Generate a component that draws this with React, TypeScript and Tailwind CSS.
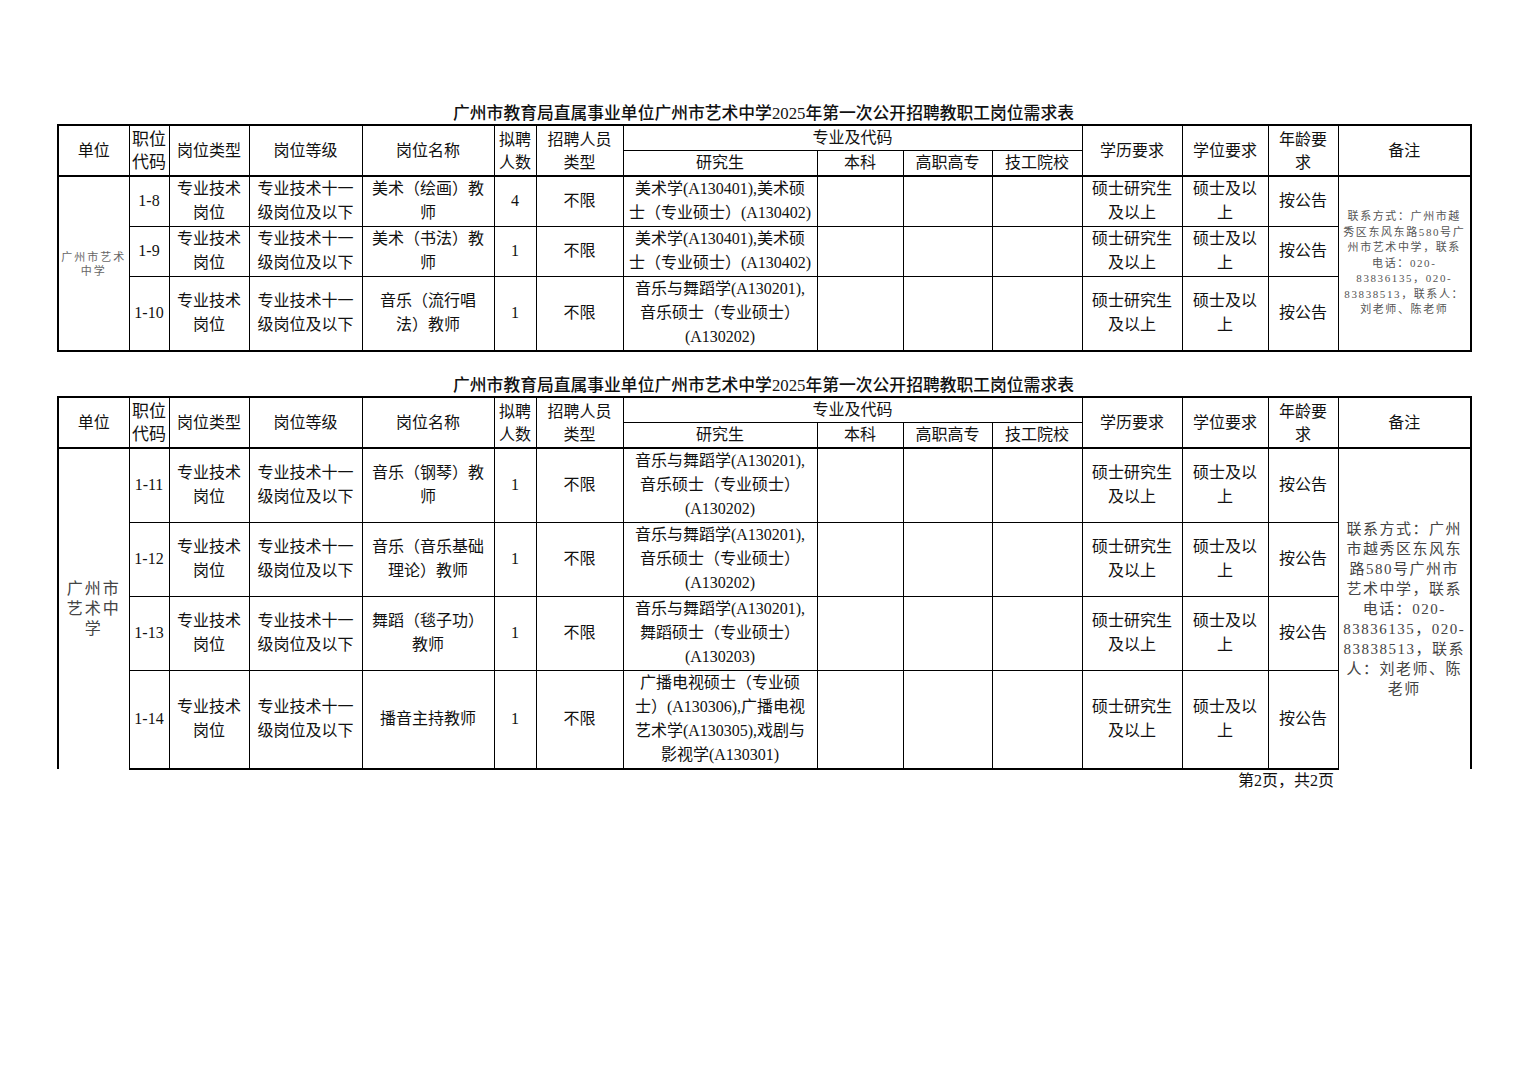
import React from 'react';

const FONT = { fontFamily: '"Liberation Serif", "Noto Sans CJK SC", serif' };

const cols = [71, 40, 80, 113, 132, 42, 87, 194, 86, 89, 90, 100, 86, 70, 133];

const TYPE = ['专业技术', '岗位'];
const GRADE = ['专业技术十一', '级岗位及以下'];
const EDU = ['硕士研究生', '及以上'];
const DEGREE = ['硕士及以', '上'];

type Row = { code: string; name: string[]; count: string; major: string[]; h: string };

const rowsA: Row[] = [
  { code: '1-8', name: ['美术（绘画）教', '师'], count: '4', major: ['美术学(A130401),美术硕', '士（专业硕士）(A130402)'], h: 'h-[50px]' },
  { code: '1-9', name: ['美术（书法）教', '师'], count: '1', major: ['美术学(A130401),美术硕', '士（专业硕士）(A130402)'], h: 'h-[50px]' },
  { code: '1-10', name: ['音乐（流行唱', '法）教师'], count: '1', major: ['音乐与舞蹈学(A130201),', '音乐硕士（专业硕士）', '(A130202)'], h: 'h-[75px]' },
];

const rowsB: Row[] = [
  { code: '1-11', name: ['音乐（钢琴）教', '师'], count: '1', major: ['音乐与舞蹈学(A130201),', '音乐硕士（专业硕士）', '(A130202)'], h: 'h-[74px]' },
  { code: '1-12', name: ['音乐（音乐基础', '理论）教师'], count: '1', major: ['音乐与舞蹈学(A130201),', '音乐硕士（专业硕士）', '(A130202)'], h: 'h-[74px]' },
  { code: '1-13', name: ['舞蹈（毯子功）', '教师'], count: '1', major: ['音乐与舞蹈学(A130201),', '舞蹈硕士（专业硕士）', '(A130203)'], h: 'h-[74px]' },
  { code: '1-14', name: ['播音主持教师'], count: '1', major: ['广播电视硕士（专业硕', '士）(A130306),广播电视', '艺术学(A130305),戏剧与', '影视学(A130301)'], h: 'h-[99px]' },
];

const Lines = ({ lines }: { lines: string[] }) => (
  <>
    {lines.map((l, i) => (
      <div key={i} className="whitespace-nowrap">{l}</div>
    ))}
  </>
);

const cell = 'border border-black p-0 text-center align-middle';

const Title = () => (
  <div className="w-[1413px] text-center text-[16.8px] leading-[20px] font-medium text-[#111]">
    广州市教育局直属事业单位广州市艺术中学2025年第一次公开招聘教职工岗位需求表
  </div>
);

const Head = () => (
  <thead>
    <tr className="h-[25px]">
      <th rowSpan={2} className={`${cell} font-normal`}>单位</th>
      <th rowSpan={2} className={`${cell} font-normal leading-[23px] text-[17px]`}><Lines lines={['职位', '代码']} /></th>
      <th rowSpan={2} className={`${cell} font-normal`}>岗位类型</th>
      <th rowSpan={2} className={`${cell} font-normal`}>岗位等级</th>
      <th rowSpan={2} className={`${cell} font-normal`}>岗位名称</th>
      <th rowSpan={2} className={`${cell} font-normal leading-[23px]`}><Lines lines={['拟聘', '人数']} /></th>
      <th rowSpan={2} className={`${cell} font-normal leading-[23px]`}><Lines lines={['招聘人员', '类型']} /></th>
      <th colSpan={4} className={`${cell} font-normal`}>专业及代码</th>
      <th rowSpan={2} className={`${cell} font-normal`}>学历要求</th>
      <th rowSpan={2} className={`${cell} font-normal`}>学位要求</th>
      <th rowSpan={2} className={`${cell} font-normal leading-[23px]`}><Lines lines={['年龄要', '求']} /></th>
      <th rowSpan={2} className={`${cell} font-normal`}>备注</th>
    </tr>
    <tr className="h-[24px] border-b-2 border-black">
      <th className={`${cell} font-normal`}>研究生</th>
      <th className={`${cell} font-normal`}>本科</th>
      <th className={`${cell} font-normal`}>高职高专</th>
      <th className={`${cell} font-normal`}>技工院校</th>
    </tr>
  </thead>
);

const Cells = ({ r, last }: { r: Row; last?: boolean }) => {
  const c = `${cell} ${last ? 'border-b-2' : ''}`;
  return (
    <>
      <td className={c}>{r.code}</td>
      <td className={c}><Lines lines={TYPE} /></td>
      <td className={c}><Lines lines={GRADE} /></td>
      <td className={c}><Lines lines={r.name} /></td>
      <td className={c}>{r.count}</td>
      <td className={c}>不限</td>
      <td className={c}><Lines lines={r.major} /></td>
      <td className={c}></td>
      <td className={c}></td>
      <td className={c}></td>
      <td className={c}><Lines lines={EDU} /></td>
      <td className={c}><Lines lines={DEGREE} /></td>
      <td className={c}>按公告</td>
    </>
  );
};

const ColGroup = () => (
  <colgroup>
    {cols.map((w, i) => (
      <col key={i} style={{ width: w }} />
    ))}
  </colgroup>
);

export default function App() {
  return (
    <div className="min-h-screen bg-white text-[#111] pt-[104px] pl-[57px]" style={FONT}>
      <Title />
      <table className="w-[1413px] table-fixed border-collapse border-2 border-black text-[16px] leading-[24px]">
        <ColGroup />
        <Head />
        <tbody>
          {rowsA.map((r, i) => (
            <tr key={r.code} className={r.h}>
              {i === 0 && (
                <td rowSpan={3} className={`${cell} text-[11px] leading-[14px] tracking-[2px] text-[#666]`}>
                  <Lines lines={['广州市艺术', '中学']} />
                </td>
              )}
              <Cells r={r} />
              {i === 0 && (
                <td rowSpan={3} className={`${cell} text-[11px] leading-[15.5px] tracking-[1.6px] text-[#555]`}>
                  <Lines
                    lines={[
                      '联系方式：广州市越',
                      '秀区东风东路580号广',
                      '州市艺术中学，联系',
                      '电话：020-',
                      '83836135，020-',
                      '83838513，联系人：',
                      '刘老师、陈老师',
                    ]}
                  />
                </td>
              )}
            </tr>
          ))}
        </tbody>
      </table>

      <div className="mt-[24px]">
        <Title />
      </div>
      <table className="w-[1413px] table-fixed border-collapse border-2 border-b-0 border-black text-[16px] leading-[24px]">
        <ColGroup />
        <Head />
        <tbody>
          {rowsB.map((r, i) => (
            <tr key={r.code} className={r.h}>
              {i === 0 && (
                <td rowSpan={4} className={`${cell} border-b-0 text-[16px] leading-[20px] tracking-[2px] text-[#444]`}>
                  <Lines lines={['广州市', '艺术中', '学']} />
                </td>
              )}
              <Cells r={r} last={i === rowsB.length - 1} />
              {i === 0 && (
                <td rowSpan={4} className={`${cell} border-b-0 text-[15px] leading-[20px] tracking-[1.5px] text-[#444]`}>
                  <Lines
                    lines={[
                      '联系方式：广州',
                      '市越秀区东风东',
                      '路580号广州市',
                      '艺术中学，联系',
                      '电话：020-',
                      '83836135，020-',
                      '83838513，联系',
                      '人：刘老师、陈',
                      '老师',
                    ]}
                  />
                </td>
              )}
            </tr>
          ))}
        </tbody>
      </table>
      <div className="w-[1413px] pr-[136px] pt-[1px] text-right text-[16px] leading-[20px]">第2页，共2页</div>
    </div>
  );
}
